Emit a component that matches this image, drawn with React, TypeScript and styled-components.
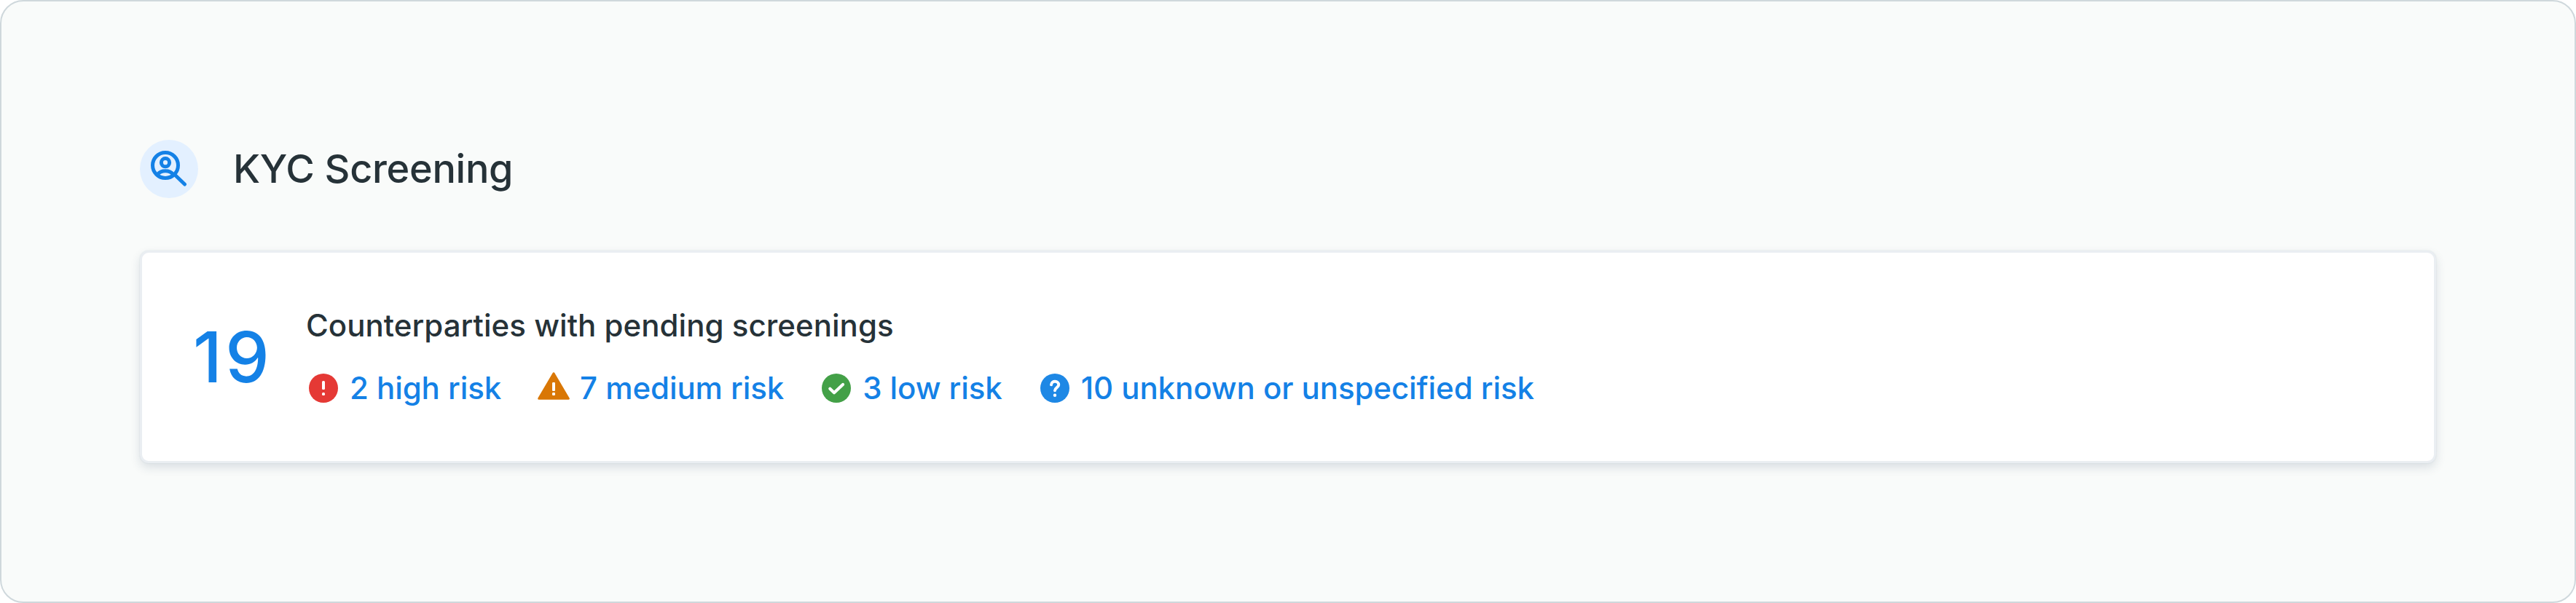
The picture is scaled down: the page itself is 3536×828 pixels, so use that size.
import React from "react";
import styled, { createGlobalStyle } from "styled-components";

const GlobalStyle = createGlobalStyle`
  *, *::before, *::after { box-sizing: border-box; }
  html, body { margin: 0; background: #ffffff; }
  body { font-family: Inter, "Liberation Sans", sans-serif; color: #263238; }
`;

const Panel = styled.section`
  height: 828px;
  padding: 190px;
  background: #f9fbfa;
  border: 2px solid #cfd8dc;
  border-radius: 32px;
`;

const Header = styled.header`
  display: flex;
  align-items: center;
  gap: 48px;
  height: 80px;
  margin-bottom: 72px;
`;

const IconBadge = styled.span`
  display: flex;
  width: 80px;
  height: 80px;
  border-radius: 50%;
  background: #e3f0ff;
`;

const Title = styled.h2`
  margin: 0;
  font-size: 54px;
  font-weight: 500;
  letter-spacing: -0.3px;
  line-height: 80px;
  white-space: nowrap;
`;

const Card = styled.div`
  display: flex;
  align-items: center;
  gap: 51px;
  height: 292px;
  padding: 0 70px;
  background: #ffffff;
  border: 3px solid #eaeef2;
  border-radius: 12px;
  box-shadow: 0 0 2px rgba(50, 100, 120, 0.12), 0 6px 14px rgba(38, 60, 90, 0.14);
`;

const Total = styled.span`
  width: 104px;
  font-size: 96px;
  font-weight: 500;
  letter-spacing: 4.500px;
  line-height: 116px;
  color: #1481e6;
`;

const Details = styled.div`
  display: flex;
  flex-direction: column;
  gap: 30px;
`;

const Caption = styled.p`
  margin: 0;
  font-size: 42px;
  font-weight: 500;
  letter-spacing: 0.04px;
  line-height: 56px;
  white-space: nowrap;
`;

const RiskList = styled.ul`
  display: flex;
  gap: 48px;
  margin: 0;
  padding: 0;
  list-style: none;
`;

const RiskItem = styled.li`
  display: flex;
  align-items: center;
  gap: 12px;
  font-size: 42px;
  font-weight: 500;
  letter-spacing: -0.07px;
  line-height: 56px;
  color: #1481e6;
  white-space: nowrap;
`;

const Glyph = styled.svg`
  display: block;
  flex: none;
`;

const SearchPerson = () => (
  <Glyph width="80" height="80" viewBox="0 0 80 80" fill="none" stroke="#1481e6" strokeWidth="5" strokeLinecap="round">
    <circle cx="35" cy="35" r="17.5" />
    <circle cx="35" cy="31.2" r="5.6" />
    <path d="M24.500 47.500C27 43.800 31 42.800 35 42.800S43 43.800 45.500 47.500" />
    <path d="M48 48L61.500 61" />
  </Glyph>
);

const HighIcon = () => (
  <Glyph width="48" height="48" viewBox="0 0 48 48">
    <circle cx="24" cy="24" r="20" fill="#e53935" />
    <rect x="22" y="14" width="4" height="12" rx="1.5" fill="#fff" />
    <rect x="22" y="30" width="4" height="4" rx="1.5" fill="#fff" />
  </Glyph>
);

const MediumIcon = () => (
  <Glyph width="48" height="48" viewBox="0 0 48 48">
    <path d="M24 3.800L44.300 38.300H3.700Z" fill="#d97706" stroke="#d97706" strokeWidth="3" strokeLinejoin="round" />
    <rect x="22" y="16" width="4" height="12" rx="1.2" fill="#fff" />
    <rect x="22" y="30" width="4" height="4" rx="1.2" fill="#fff" />
  </Glyph>
);

const LowIcon = () => (
  <Glyph width="48" height="48" viewBox="0 0 48 48">
    <circle cx="24" cy="24" r="20" fill="#43a047" />
    <path d="M15.300 24.800L21 30.200L33 19" stroke="#fff" strokeWidth="4.200" strokeLinecap="round" strokeLinejoin="round" fill="none" />
  </Glyph>
);

const UnknownIcon = () => (
  <Glyph width="48" height="48" viewBox="0 0 48 48">
    <circle cx="24" cy="24" r="20" fill="#1e88e5" />
    <path d="M19 19.300C19.500 13.200 29.200 13.500 29.200 19.500C29.200 23 24 23.300 24 27.300" stroke="#fff" strokeWidth="4" strokeLinecap="round" fill="none" />
    <circle cx="24" cy="33.800" r="2.200" fill="#fff" />
  </Glyph>
);

const risks = [
  { Icon: HighIcon, label: "2 high risk" },
  { Icon: MediumIcon, label: "7 medium risk" },
  { Icon: LowIcon, label: "3 low risk" },
  { Icon: UnknownIcon, label: "10 unknown or unspecified risk" },
];

export default function App() {
  return (
    <>
      <GlobalStyle />
      <Panel>
        <Header>
          <IconBadge><SearchPerson /></IconBadge>
          <Title>KYC Screening</Title>
        </Header>
        <Card>
          <Total>19</Total>
          <Details>
            <Caption>Counterparties with pending screenings</Caption>
            <RiskList>
              {risks.map(({ Icon, label }) => (
                <RiskItem key={label}><Icon />{label}</RiskItem>
              ))}
            </RiskList>
          </Details>
        </Card>
      </Panel>
    </>
  );
}
